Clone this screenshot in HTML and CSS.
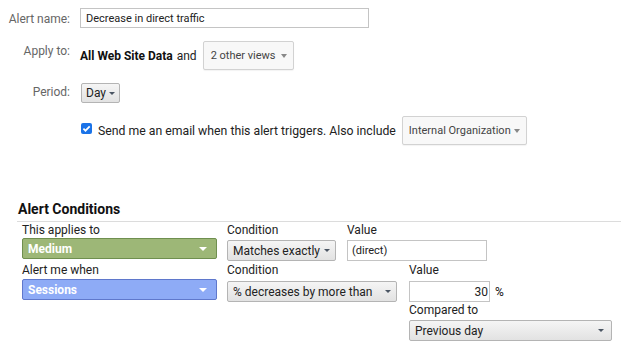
FILE: index.html
```html
<!DOCTYPE html>
<html>
<head>
<meta charset="utf-8">
<link rel="stylesheet" href="styles.css">
</head>
<body>
<div class="form">
  <div class="row row-name">
    <div class="label lbl-name">Alert name:</div>
    <div class="text-input name-input">Decrease in direct traffic</div>
  </div>
  <div class="row row-apply">
    <div class="label lbl-apply">Apply to:</div>
    <div class="apply">
      <span class="strong">All Web Site Data</span><span class="and">and</span>
      <div class="menu-btn views-btn"><span>2 other views</span><span class="tri tri-gray"></span></div>
    </div>
  </div>
  <div class="row row-period">
    <div class="label lbl-period">Period:</div>
    <div class="gbtn day-btn"><span>Day</span><span class="tri tri-dark"></span></div>
  </div>
  <div class="row row-email">
    <span class="check"><svg viewBox="0 0 11 11" width="11" height="11"><path d="M2.4 5.6 L4.5 7.7 L8.7 3.3" fill="none" stroke="#fff" stroke-width="1.7"/></svg></span>
    <span class="email-text">Send me an email when this alert triggers. Also include</span>
    <div class="menu-btn org-btn"><span>Internal Organization</span><span class="tri tri-gray"></span></div>
  </div>
</div>

<div class="conditions">
  <div class="cond-title">Alert Conditions</div>
  <div class="cond-body">
    <div class="cond-row">
      <div class="field f-dim">
        <div class="flabel">This applies to</div>
        <div class="dim-select green"><span>Medium</span><span class="tri tri-white"></span></div>
      </div>
      <div class="field f-cond1">
        <div class="flabel">Condition</div>
        <div class="gbtn cbtn match-btn"><span>Matches exactly</span><span class="tri tri-dark"></span></div>
      </div>
      <div class="field">
        <div class="flabel">Value</div>
        <div class="text-input val-input">(direct)</div>
      </div>
    </div>
    <div class="cond-row row2">
      <div class="field f-dim">
        <div class="flabel">Alert me when</div>
        <div class="dim-select blue"><span>Sessions</span><span class="tri tri-white"></span></div>
      </div>
      <div class="field f-cond2">
        <div class="flabel">Condition</div>
        <div class="gbtn cbtn dec-btn"><span>% decreases by more than</span><span class="tri tri-dark"></span></div>
      </div>
      <div class="field">
        <div class="flabel">Value</div>
        <div class="pct-line"><div class="text-input num-input">30</div><span class="pct">%</span></div>
        <div class="flabel compared">Compared to</div>
        <div class="gbtn cbtn prev-btn"><span>Previous day</span><span class="tri tri-dark"></span></div>
      </div>
    </div>
  </div>
</div>
</body>
</html>
```

FILE: styles.css
```css
* { box-sizing: border-box; }
html, body { margin: 0; padding: 0; background: #fff; }
body {
  font-family: Roboto, "Liberation Sans", Arial, sans-serif;
  font-size: 12px;
  color: #222;
  width: 621px;
  height: 358px;
  overflow: hidden;
}

.form { padding-top: 8px; }
.row { display: flex; align-items: flex-start; margin-bottom: 13px; }
.label {
  width: 70px;
  text-align: right;
  color: #666;
  font-size: 12px;
  line-height: 16px;
  margin-right: 10px;
  flex: none;
}
.lbl-name { padding-top: 3px; }
.lbl-apply { padding-top: 2px; }
.lbl-period { padding-top: 1px; }

.text-input {
  border: 1px solid #c4c4c4;
  background: #fff;
  font-size: 11px;
  color: #222;
  display: flex;
  align-items: center;
}
.name-input { width: 289px; height: 20px; padding-left: 5px; }

.apply { display: flex; align-items: center; height: 29px; }
.strong { font-weight: bold; font-size: 12px; color: #111; }
.and { margin-left: 4px; margin-right: 6px; font-size: 12px; color: #222; }

.menu-btn {
  display: flex;
  align-items: center;
  justify-content: space-between;
  height: 29px;
  border: 1px solid #d2d2d2;
  border-radius: 2px;
  background: #f8f8f8;
  font-size: 11px;
  color: #444;
  box-shadow: 0 1px 1px rgba(0,0,0,0.05);
}
.views-btn { width: 91px; padding: 0 6px 0 7px; }
.org-btn { width: 125px; padding: 0 6px 0 6px; }

.tri { width: 0; height: 0; border-left: 3px solid transparent; border-right: 3px solid transparent; flex: none; }
.tri-gray { border-top: 4px solid #888; }
.tri-dark { border-top: 3px solid #4a5563; border-left-width: 3px; border-right-width: 3px; }
.tri-white { border-top: 4px solid #fff; border-left-width: 4px; border-right-width: 4px; }

.gbtn {
  display: flex;
  align-items: center;
  border: 1px solid #b4b4b4;
  border-radius: 2px;
  background: linear-gradient(#f5f5f5, #e2e2e2);
  color: #222;
  font-size: 12px;
}
.day-btn { width: 39px; height: 20px; padding-left: 4px; margin-left: 1px; }
.day-btn .tri { margin-left: 3px; }

.row-email { margin-left: 80px; align-items: center; margin-top: 0; }
.check {
  width: 11px; height: 11px;
  border-radius: 2px;
  background: #1a73e8;
  display: flex;
  margin-right: 6px;
  margin-top: -4px;
  margin-left: 1px;
}
.check svg { display: block; }
.email-text { font-size: 12.25px; color: #222; margin-right: 6px; }

.conditions { margin: 56px 0 0 17px; }
.cond-title {
  font-size: 14px;
  font-weight: bold;
  line-height: 17px;
  color: #111;
  padding: 0 0 3px 1px;
  border-bottom: 1px solid #dcdcdc;
}
.cond-body { padding-left: 5px; }
.cond-row { display: flex; align-items: flex-start; }
.row2 { margin-top: 1px; }
.field { display: flex; flex-direction: column; align-items: flex-start; }
.f-dim { width: 205px; }
.f-cond1 { width: 120px; }
.f-cond2 { width: 182px; }
.flabel { font-size: 12px; line-height: 15px; color: #222; padding-top: 1px; }

.dim-select {
  width: 195px;
  height: 21px;
  margin-top: 0;
  border-radius: 2px;
  display: flex;
  align-items: center;
  justify-content: space-between;
  padding: 0 9px 0 5px;
  color: #fff;
  font-weight: bold;
  font-size: 12px;
}
.row2 .dim-select { margin-top: 1px; }
.green { background: #9db777; border: 1px solid #6f8f4f; }
.blue { background: #8eabf6; border: 1px solid #5f78cc; }

.cbtn { height: 21px; margin-top: 2px; padding: 0 5px 0 5px; justify-content: space-between; }
.row2 .cbtn { margin-top: 3px; }
.match-btn { width: 109px; }
.dec-btn { width: 170px; }
.prev-btn { width: 203px; height: 21px; padding-right: 7px; }
.row2 .prev-btn { margin-top: 2px; }

.val-input { width: 140px; height: 21px; margin-top: 2px; padding-left: 4px; }
.pct-line { display: flex; align-items: center; margin-top: 3px; }
.num-input { width: 81px; height: 21px; justify-content: flex-end; padding-right: 1px; font-size: 12px; }
.pct { margin-left: 5px; font-size: 12px; color: #111; }
.compared { margin-top: 0; }
```
